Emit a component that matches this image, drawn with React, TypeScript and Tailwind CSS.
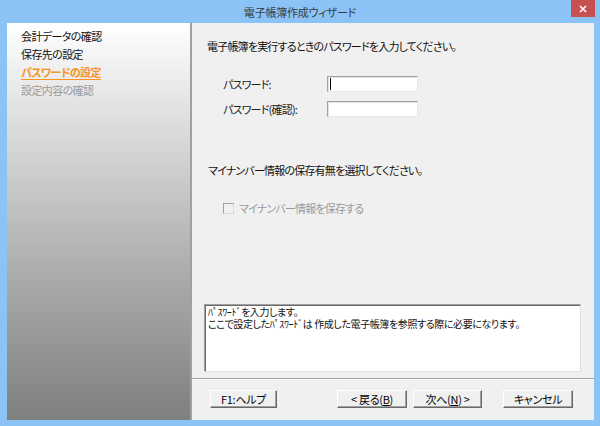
import React from "react";

const font = "font-['Noto_Sans_CJK_JP',sans-serif] [font-feature-settings:'palt']";

function Btn({ children, className = "" }: { children: React.ReactNode; className?: string }) {
  return (
    <div
      className={`h-[18px] flex items-center justify-center text-[11px] leading-[14px] tracking-[-0.3px] text-black bg-[#f0f0f0] border border-t-white border-l-white border-r-[#696969] border-b-[#696969] shadow-[inset_-1px_-1px_0_#a0a0a0] ${className}`}
    >
      {children}
    </div>
  );
}

function Input({ cursor = false }: { cursor?: boolean }) {
  return (
    <div className="w-[91px] h-[16px] bg-white border border-t-[#a0a0a0] border-l-[#a0a0a0] border-r-[#e8e8e8] border-b-[#e8e8e8] shadow-[inset_1px_1px_0_#e3e3e3] flex items-center pl-[2px]">
      {cursor && <div className="w-px h-[12px] bg-black" />}
    </div>
  );
}

export default function App() {
  return (
    <div className={`w-[600px] h-[426px] bg-[#8bc3f6] flex flex-col ${font}`}>
      <div className="h-[23px] relative flex items-center justify-center">
        <span className="text-[11px] leading-[14px] tracking-[-0.2px] text-[#3a3a3a] mt-[1px]">電子帳簿作成ウィザード</span>
        <div className="absolute right-[5px] top-0 w-[24px] h-[17px] bg-[#c75050] flex items-center justify-center">
          <svg width="8" height="8" viewBox="0 0 8 8">
            <path d="M1 1 L7 7 M7 1 L1 7" stroke="white" strokeWidth="1.6" />
          </svg>
        </div>
      </div>
      <div className="flex-1 flex pl-[7px] pr-[6px] pb-[6px]">
        <div className="w-[183px] bg-gradient-to-b from-white to-[#7f7f7f] pt-[4px] pl-[14px] text-[11px] leading-[18px] tracking-[-0.6px]">
          <div className="text-[#111]">会計データの確認</div>
          <div className="text-[#111]">保存先の設定</div>
          <div className="text-[#f7931e] font-bold underline underline-offset-2">パスワードの設定</div>
          <div className="text-[#9a9a9a]">設定内容の確認</div>
        </div>
        <div className="flex-1 bg-[#f0f0f0] border-l-2 border-[#a0a0a0] flex flex-col text-[11px] leading-[16px] tracking-[-0.8px] text-[#111]">
          <div className="pt-[15px] pl-[15px]">電子帳簿を実行するときのパスワードを入力してください。</div>
          <div className="mt-[22px] pl-[31px] flex items-center">
            <div className="w-[104px] text-[#222]">パスワード:</div>
            <Input cursor />
          </div>
          <div className="mt-[9px] pl-[31px] flex items-center">
            <div className="w-[104px] text-[#222]">パスワード(確認):</div>
            <Input />
          </div>
          <div className="mt-[45px] pl-[16px]">マイナンバー情報の保存有無を選択してください。</div>
          <div className="mt-[22px] pl-[31px] flex items-center gap-[5px] text-[#9a9a9a]">
            <div className="w-[11px] h-[11px] border border-t-[#a0a0a0] border-l-[#a0a0a0] border-r-[#d8d8d8] border-b-[#d8d8d8] bg-[#f0f0f0]" />
            <span>マイナンバー情報を保存する</span>
          </div>
          <div className="flex-1" />
          <div className="mx-[12px] mr-[13px] h-[68px] bg-white border border-t-[#a0a0a0] border-l-[#a0a0a0] border-r-[#e0e0e0] border-b-[#e0e0e0] shadow-[inset_1px_1px_0_#696969] px-[3px] pt-[1px] text-[10px] leading-[12px] tracking-[-0.4px]">
            <div>ﾊﾟｽﾜｰﾄﾞを入力します。</div>
            <div>ここで設定したﾊﾟｽﾜｰﾄﾞは 作成した電子帳簿を参照する際に必要になります。</div>
          </div>
          <div className="mt-[6px] border-t border-[#a0a0a0] border-b border-b-white" />
          <div className="mt-[10px] mb-[12px] pl-[18px] flex items-center">
            <Btn className="w-[67px]">F1:ヘルプ</Btn>
            <Btn className="w-[70px] ml-[60px]">
              &lt; 戻る(<span className="underline">B</span>)
            </Btn>
            <Btn className="w-[69px] ml-[6px]">
              次へ(<span className="underline">N</span>) &gt;
            </Btn>
            <Btn className="w-[70px] ml-[21px]">キャンセル</Btn>
          </div>
        </div>
      </div>
    </div>
  );
}
